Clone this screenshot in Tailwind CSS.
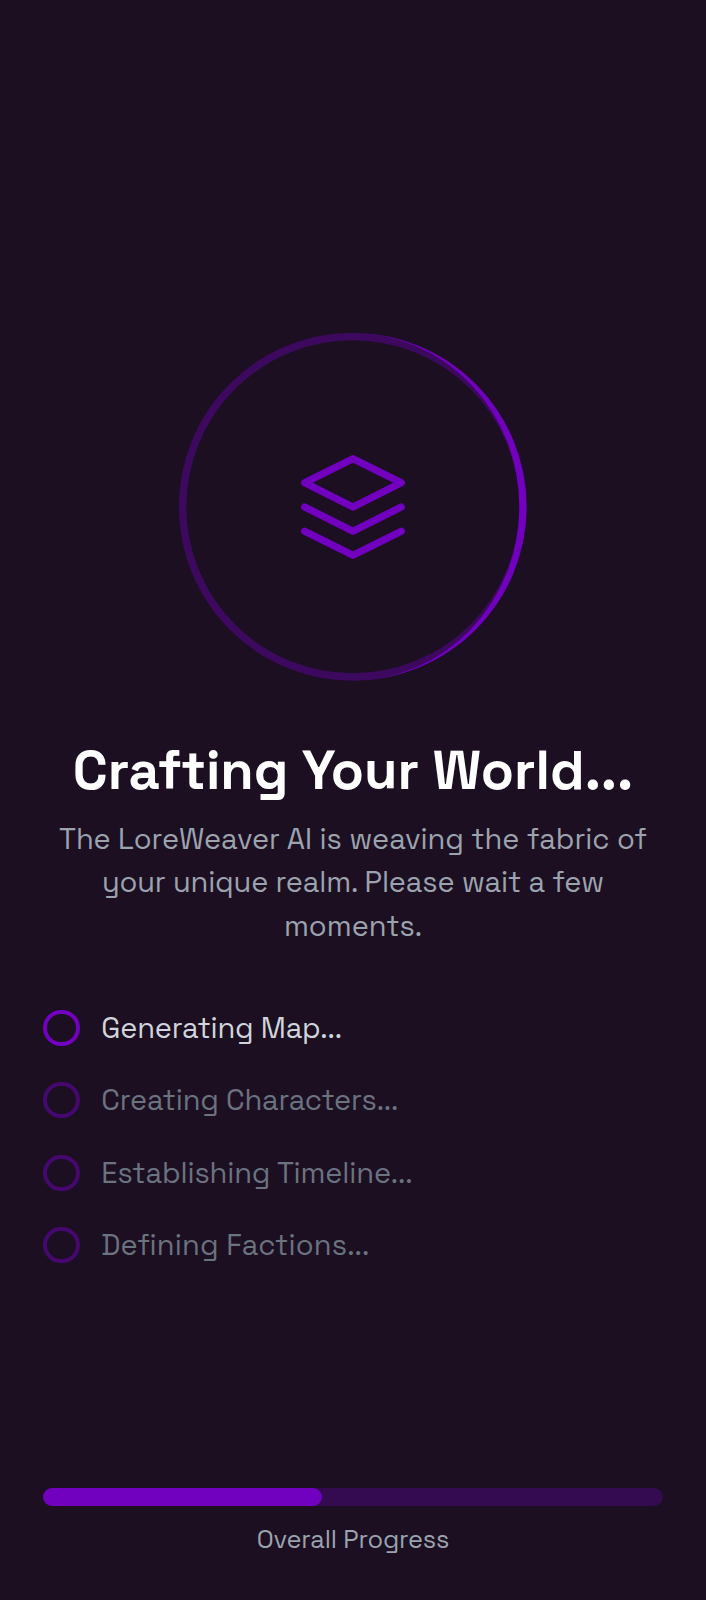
<!DOCTYPE html>
<html lang="en">
<head>
<meta charset="utf-8">
<title>Crafting Your World</title>
<script src="https://cdn.jsdelivr.net/npm/@tailwindcss/browser@4"></script>
</head>
<body class="flex h-[1600px] flex-col justify-between overflow-hidden bg-[#1b0f21] px-[43.4px] pt-[333.2px] pb-[43.2px] font-['Space_Grotesk',Inter,sans-serif]">
<main class="flex flex-col">
  <div class="relative mx-auto flex size-[347.6px] items-center justify-center">
    <svg class="absolute inset-0 size-full text-[#7101be]" viewBox="0 0 192 192" fill="none">
      <circle cx="96" cy="96" r="94" stroke="currentColor" stroke-opacity=".4" stroke-width="4.1"/>
      <path fill="currentColor" d="M96 0A96 96 0 0 1 96 192A92 96 0 0 0 96 0Z"/>
    </svg>
    <svg class="size-[116px] text-[#7101be]" viewBox="0 0 24 24" fill="none" stroke="currentColor" stroke-width="1.5" stroke-linecap="round" stroke-linejoin="round">
      <path d="M12 2L2 7l10 5 10-5-10-5z"/>
      <path d="M2 12l10 5 10-5"/>
      <path d="M2 17l10 5 10-5"/>
    </svg>
  </div>
  <h1 class="mt-[57px] text-center text-[54.3px] leading-[65px] font-bold whitespace-nowrap text-white">Crafting Your World...</h1>
  <p class="mt-[15px] text-center text-[28.96px] leading-[43.44px] whitespace-nowrap text-[#9ca3af]">
    <span class="block tracking-[-0.04px]">The LoreWeaver AI is weaving the fabric of</span>
    <span class="block tracking-[-0.13px]">your unique realm. Please wait a few</span>
    <span class="block">moments.</span>
  </p>
  <ul class="mt-[61.7px] flex flex-col gap-[36.2px] text-[28.96px] leading-[36.6px] text-[#6b7280]">
    <li class="flex h-[36.2px] items-start gap-[21.7px] text-[#d1d5db]">
      <span class="size-[36.2px] shrink-0 rounded-full border-4 border-[#7101be]"></span>
      <span class="tracking-[-0.18px]">Generating Map...</span>
    </li>
    <li class="flex h-[36.2px] items-start gap-[21.7px]">
      <span class="size-[36.2px] shrink-0 rounded-full border-4 border-[#7101be]/50"></span>
      <span class="tracking-[-0.15px]">Creating Characters...</span>
    </li>
    <li class="flex h-[36.2px] items-start gap-[21.7px]">
      <span class="size-[36.2px] shrink-0 rounded-full border-4 border-[#7101be]/50"></span>
      <span class="tracking-[-0.11px]">Establishing Timeline...</span>
    </li>
    <li class="flex h-[36.2px] items-start gap-[21.7px]">
      <span class="size-[36.2px] shrink-0 rounded-full border-4 border-[#7101be]/50"></span>
      <span class="tracking-[0.15px] [font-variant-ligatures:common-ligatures]">Defining Factions...</span>
    </li>
  </ul>
</main>
<footer class="flex flex-col gap-[15.2px]">
  <div class="h-[18.1px] rounded-full bg-[#7101be]/30">
    <div class="h-full rounded-full bg-[#7101be]" style="width:45%"></div>
  </div>
  <p class="text-center text-[25.34px] leading-[36px] tracking-[-0.13px] text-[#9ca3af]">Overall Progress</p>
</footer>
</body>
</html>
